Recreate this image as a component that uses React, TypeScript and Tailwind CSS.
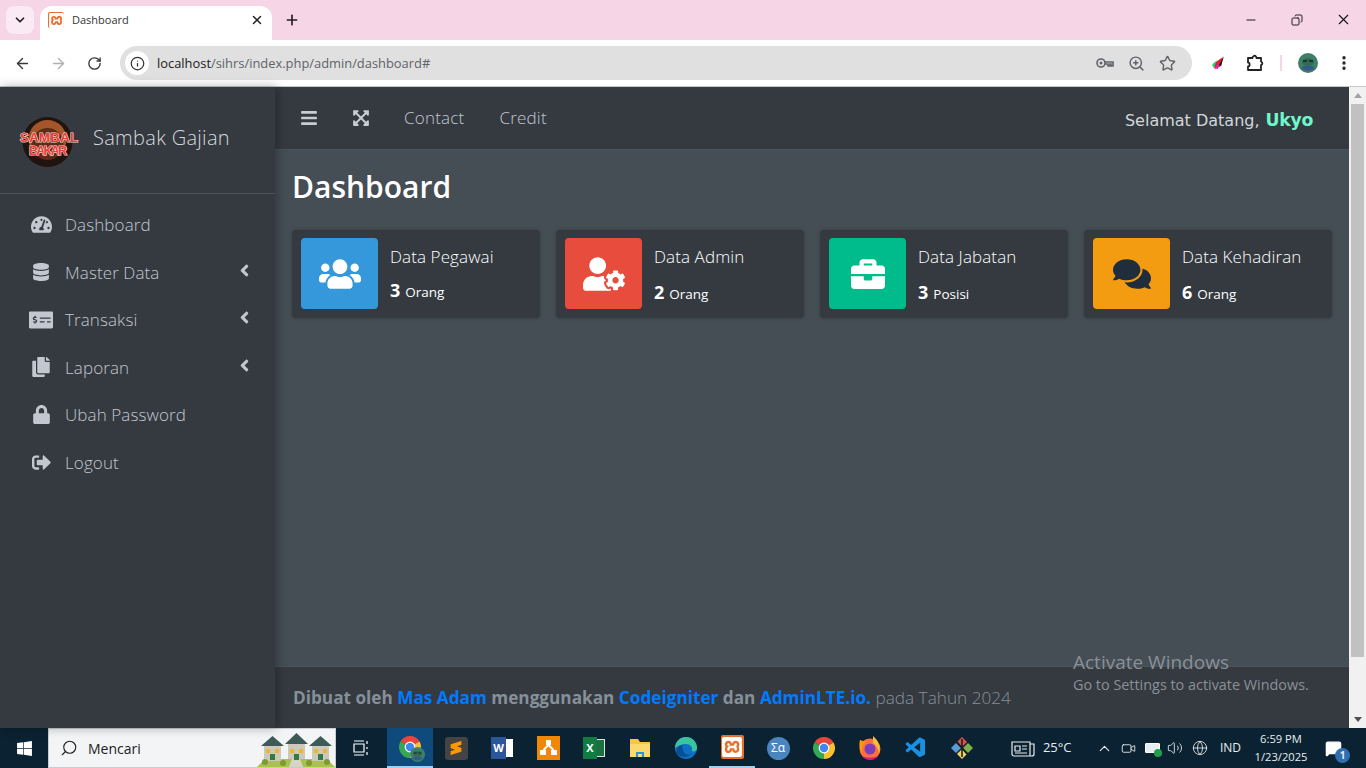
import { ArrowLeft, ArrowRight, ChevronDown, ChevronUp, Info, Minus, Plus, RotateCw, Search, Star, X, ZoomIn, Copy, MoreVertical, Video, Volume2, Globe, MessageSquare } from 'lucide-react'
import { FaAngleLeft, FaBars, FaBriefcase, FaComments, FaCopy, FaDatabase, FaExpandArrowsAlt, FaLock, FaMoneyCheckAlt, FaSignOutAlt, FaTachometerAlt, FaUserCog, FaUsers, FaWindows } from 'react-icons/fa'
import { SiSublimetext, SiXampp } from 'react-icons/si'
import { VscVscode } from 'react-icons/vsc'

const menu = [
  { label: 'Dashboard', icon: FaTachometerAlt, size: 'text-[21px]', arrow: false },
  { label: 'Master Data', icon: FaDatabase, size: 'text-[18px]', arrow: true },
  { label: 'Transaksi', icon: FaMoneyCheckAlt, size: 'text-[24px]', arrow: true },
  { label: 'Laporan', icon: FaCopy, size: 'text-[20px]', arrow: true },
  { label: 'Ubah Password', icon: FaLock, size: 'text-[19px]', arrow: false },
  { label: 'Logout', icon: FaSignOutAlt, size: 'text-[19px]', arrow: false },
]

const cards = [
  { title: 'Data Pegawai', value: '3', unit: 'Orang', icon: FaUsers, iconSize: 'text-[42px]', box: 'bg-[#3498db] text-white', shift: 'mt-[8px]' },
  { title: 'Data Admin', value: '2', unit: 'Orang', icon: FaUserCog, iconSize: 'text-[42px]', box: 'bg-[#e74c3c] text-white', shift: 'mt-[10px]' },
  { title: 'Data Jabatan', value: '3', unit: 'Posisi', icon: FaBriefcase, iconSize: 'text-[34px]', box: 'bg-[#00bc8c] text-white', shift: 'mt-[10px]' },
  { title: 'Data Kehadiran', value: '6', unit: 'Orang', icon: FaComments, iconSize: 'text-[38px]', box: 'bg-[#f39c12] text-[#1f2d3d]', shift: 'mt-[10px]' },
]

function ChromeLogo({ size = 24 }: { size?: number }) {
  return (
    <svg width={size} height={size} viewBox="0 0 24 24">
      <path d="M12 12L2.470 6.500A11 11 0 0 1 21.530 6.500z" fill="#e8453c" />
      <path d="M12 12L21.530 6.500A11 11 0 0 1 12 23z" fill="#fbc02d" />
      <path d="M12 12L12 23A11 11 0 0 1 2.470 6.500z" fill="#34a853" />
      <circle cx="12" cy="12" r="5.400" fill="#fff" />
      <circle cx="12" cy="12" r="4.200" fill="#4285f4" />
    </svg>
  )
}

function Avatar({ size }: { size: number }) {
  return (
    <svg width={size} height={size} viewBox="0 0 20 20">
      <circle cx="10" cy="10" r="10" fill="#3f7f68" />
      <path d="M3 15c2-3 12-3 14 0a10 10 0 0 1-14 0z" fill="#36598a" />
      <ellipse cx="10" cy="9" rx="6" ry="4" fill="#2f6b55" />
      <path d="M5 8h4M11 8h4" stroke="#17231e" strokeWidth="1.400" />
    </svg>
  )
}

function BrandLogo() {
  return (
    <svg width="62" height="60" viewBox="0 0 62 60" className="mt-[8px]">
      <circle cx="29.500" cy="30" r="25" fill="#21140e" />
      <circle cx="29.500" cy="27" r="19" fill="#a4552a" />
      <circle cx="29.500" cy="32" r="16" fill="#5c2c17" />
      <g fontFamily="'Liberation Sans', sans-serif" fontWeight="700" fill="#e53c3c" stroke="#f8dccb" strokeWidth="1.200" paintOrder="stroke">
        <text x="2" y="30" fontSize="13" textLength="58">SAMBAL</text>
        <text x="11" y="43" fontSize="12.500" textLength="38">BAKAR</text>
      </g>
    </svg>
  )
}

function Houses() {
  return (
    <svg width="78" height="36" viewBox="0 0 78 36">
      <path d="M0 36l8-8h62l8 8z" fill="#a9c24f" />
      <path d="M32 36l3-8h8l3 8z" fill="#d9d5c4" />
      {[6, 30, 54].map(x => (
        <g key={x}>
          <rect x={x + 1} y={x === 30 ? 12 : 14} width="17" height="16" fill="#cfc8b8" />
          <path d={`M${x - 2} ${x === 30 ? 13 : 15}l11.500-${x === 30 ? 11 : 10} 11.500 ${x === 30 ? 11 : 10}z`} fill="#3c5b58" />
          <rect x={x + 3} y="18" width="4" height="4" fill="#e3b93c" />
          <rect x={x + 12} y="18" width="4" height="4" fill="#e3b93c" />
          <rect x={x + 7} y="23" width="5" height="6" fill="#2f7d46" />
        </g>
      ))}
      <circle cx="8" cy="31" r="3" fill="#7f9b2e" />
      <circle cx="26" cy="32" r="3" fill="#7f9b2e" />
      <circle cx="52" cy="32" r="3" fill="#7f9b2e" />
      <circle cx="70" cy="31" r="3" fill="#7f9b2e" />
    </svg>
  )
}

function WordIcon() {
  return (
    <div className="relative h-[22px] w-[22px]">
      <div className="absolute right-0 top-[2px] h-[18px] w-[14px] bg-white" />
      <div className="absolute left-0 top-0 flex h-[22px] w-[15px] items-center justify-center bg-[#2b579a] text-[11px] font-bold text-white">W</div>
    </div>
  )
}

function ExcelIcon() {
  return (
    <div className="relative h-[22px] w-[22px]">
      <div className="absolute right-0 top-[2px] h-[18px] w-[14px] border border-[#d7e8dd] bg-[#1d6f42]" />
      <div className="absolute left-0 top-0 flex h-[22px] w-[14px] items-center justify-center bg-[#107c41] text-[11px] font-bold text-white">X</div>
    </div>
  )
}

function DrawioIcon() {
  return (
    <svg width="23" height="24" viewBox="0 0 23 24">
      <rect width="23" height="24" fill="#f08705" />
      <path d="M9 4h5v5H9zM3 14h6v5H3zM14 14h6v5h-6z" fill="#fff" />
      <path d="M11.500 9l-5 5M11.500 9l5 5" stroke="#fff" strokeWidth="2" />
    </svg>
  )
}

function FolderIcon() {
  return (
    <svg width="22" height="20" viewBox="0 0 22 20">
      <path d="M1 1h8l2 3h10v15H1z" fill="#f6c546" />
      <path d="M1 6h20v13H1z" fill="#fbd96f" />
      <path d="M7 14h8v5h-2v-3H9v3H7z" fill="#2f8fd8" />
    </svg>
  )
}

function EdgeIcon() {
  return (
    <svg width="24" height="24" viewBox="0 0 24 24">
      <circle cx="12" cy="12" r="11" fill="#0c70c5" />
      <path d="M1 12A11 11 0 0 1 23 12c0 3-3 4-5 3 1-4-2-7-6-7-5 0-8 2-11 4z" fill="#3ac59f" />
      <path d="M9 13c0 4 4 7 9 5a11 11 0 0 1-15 0c-2-4 1-9 6-9-1 1-1 2 0 4z" fill="#0a4f96" />
    </svg>
  )
}

function MathIcon() {
  return (
    <div className="flex h-[23px] w-[23px] items-center justify-center rounded-full bg-[#4a85bf] text-[12px] text-white">Σα</div>
  )
}

function FirefoxIcon() {
  return (
    <svg width="22" height="24" viewBox="0 0 22 24">
      <circle cx="11" cy="13" r="10.500" fill="#ff7139" />
      <path d="M14 0c6 5 8 12 6 17-1-5-3-8-6-10z" fill="#ffbd3f" />
      <path d="M1 4c-1 4-1 9 2 13 0-6 1-9 4-11z" fill="#ff980e" />
      <circle cx="11" cy="13" r="5.500" fill="#7d3bbd" />
      <path d="M3 20a10 10 0 0 0 16 0c-5 2-11 2-16 0z" fill="#e31587" />
    </svg>
  )
}

function GitGuiIcon() {
  return (
    <svg width="24" height="24" viewBox="0 0 24 24">
      <path d="M12 1l5 5-5 5-5-5z" fill="#d9534f" />
      <path d="M18 7l5 5-5 5-5-5z" fill="#7fb04a" />
      <path d="M6 7l5 5-5 5-5-5z" fill="#5b9bd5" />
      <path d="M12 13l5 5-5 5-5-5z" fill="#f1d26a" />
      <path d="M12 3v18M7 6l10 12" stroke="#1b1b1b" strokeWidth="1.500" />
    </svg>
  )
}

const taskIcons = [
  <div key="sublime" className="flex h-[23px] w-[23px] items-center justify-center rounded-[3px] bg-[#444] text-[14px] text-[#ff9800]"><SiSublimetext /></div>,
  <WordIcon key="word" />,
  <DrawioIcon key="drawio" />,
  <ExcelIcon key="excel" />,
  <FolderIcon key="folder" />,
  <EdgeIcon key="edge" />,
  <div key="xampp" className="flex h-[24px] w-[23px] items-center justify-center rounded-[2px] bg-[#e8702a] text-[20px] text-white"><SiXampp /></div>,
  <MathIcon key="math" />,
  <ChromeLogo key="chrome" />,
  <FirefoxIcon key="firefox" />,
  <VscVscode key="vscode" className="text-[24px] text-[#1b8fe0]" />,
  <GitGuiIcon key="git" />,
]

function BrowserChrome() {
  return (
    <header className="shrink-0 font-['Open_Sans',sans-serif]">
      {/* Tab strip */}
      <div className="flex h-10 items-end bg-[#f5d5e6]">
        <div className="mb-[6px] ml-[6px] flex h-[28px] w-[28px] items-center justify-center rounded-lg bg-[#faeaf3]">
          <ChevronDown size={14} strokeWidth={3} className="text-[#222]" />
        </div>
        <div className="ml-[6px] flex h-[34px] w-[232px] items-center rounded-t-xl bg-white pb-[6px] pl-2 pr-2">
          <div className="flex h-4 w-4 items-center justify-center rounded-[2px] bg-[#e8702a] text-[15px] text-white"><SiXampp /></div>
          <span className="ml-2 text-[11px] text-[#333]">Dashboard</span>
          <X size={14} strokeWidth={2.5} className="ml-auto text-[#222]" />
        </div>
        <Plus size={16} strokeWidth={2.5} className="mb-[12px] ml-[12px] text-[#222]" />
        <div className="mb-[12px] ml-auto flex items-center text-[#111]">
          <div className="flex w-[46px] justify-center"><Minus size={14} strokeWidth={1.6} /></div>
          <div className="flex w-[46px] justify-center"><Copy size={12} strokeWidth={1.8} className="-scale-x-100" /></div>
          <div className="flex w-[46px] justify-center"><X size={17} strokeWidth={1.5} /></div>
        </div>
      </div>
      {/* Address bar */}
      <div className="flex h-[47px] items-center rounded-t-lg border-b border-[#c4c7c5] bg-white">
        <div className="flex w-[116px] items-center text-[#3a3a3a]">
          <div className="flex w-[44px] justify-center"><ArrowLeft size={17} strokeWidth={2} /></div>
          <div className="-ml-[8px] flex w-[44px] justify-center text-[#b0b0b0]"><ArrowRight size={17} strokeWidth={2} /></div>
          <div className="-ml-[8px] flex w-[44px] justify-center"><RotateCw size={15} strokeWidth={2.2} /></div>
        </div>
        <div className="ml-[4px] flex h-[34px] w-[1072px] items-center rounded-full bg-[#e0e0e0] pl-[5px] pr-4">
          <div className="flex h-6 w-6 items-center justify-center rounded-full bg-white"><Info size={15} className="text-[#333]" /></div>
          <span className="ml-2 mt-[1px] text-[12.900px] text-[#202124]">localhost<span className="text-[#5f6368]">/sihrs/index.php/admin/dashboard#</span></span>
          <div className="ml-auto flex items-center gap-[14px] text-[#5f6368]">
            <svg width="18" height="12" viewBox="0 0 18 12" fill="none" stroke="currentColor" strokeWidth="1.600">
              <circle cx="5" cy="6" r="4" />
              <circle cx="5" cy="6" r="1.500" fill="currentColor" stroke="none" />
              <path d="M9 5h8v4h-2V7h-1v2h-2V7H9" />
            </svg>
            <ZoomIn size={17} />
            <Star size={17} strokeWidth={2} />
          </div>
        </div>
        <svg width="16" height="16" viewBox="0 0 16 16" className="ml-[18px]">
          <path d="M13 2L3 9l2 5 6-3z" fill="#e0202a" />
          <path d="M7 5L2 10l2 3z" fill="#21d16a" />
          <path d="M9 8l-5 5 4 1z" fill="#e81ec8" />
          <path d="M14 1l-5 9 2 1z" fill="#111" />
        </svg>
        <svg width="18" height="18" viewBox="0 0 18 18" fill="none" stroke="#222" strokeWidth="1.800" strokeLinejoin="round" className="ml-[20px]">
          <path d="M2 4h4.500a2 2 0 0 1 3.500-1.500L10.500 4H15v3.500a1.800 1.800 0 0 1 0 3.500V16H2v-3.500c2.200 0 2.200-4 0-4z" />
        </svg>
        <div className="ml-[16px] h-[16px] w-[2px] bg-[#f5d5e6]" />
        <div className="ml-[16px]"><Avatar size={20} /></div>
        <MoreVertical size={18} strokeWidth={2.5} className="ml-[17px] text-[#222]" />
      </div>
    </header>
  )
}

function Sidebar() {
  return (
    <aside className="z-10 flex w-[275px] shrink-0 flex-col bg-[#343a40] shadow-[2px_0_10px_rgba(0,0,0,0.3)]">
      <div className="flex h-[107px] items-center border-b border-[#4b545c] pb-[4px] pl-[18px]">
        <BrandLogo />
        <span className="ml-[13px] text-[20px] font-light tracking-[0.3px] text-[#d5d9dd]">Sambak Gajian</span>
      </div>
      <nav className="flex flex-col pt-[7px]">
        {menu.map(item => (
          <div key={item.label} className="flex h-[47.500px] items-center pl-[28px] pr-[21px] text-[#c2c7d0]">
            <div className={`flex w-[26px] justify-center ${item.size}`}><item.icon /></div>
            <span className="ml-[11px] text-[17px] font-light tracking-[0.1px]">{item.label}</span>
            {item.arrow && <FaAngleLeft className="ml-auto -translate-y-[2px] text-[19px]" />}
          </div>
        ))}
      </nav>
    </aside>
  )
}

function Navbar() {
  return (
    <div className="flex h-[63px] shrink-0 items-center border-b border-[#4b545c] bg-[#343a40] pl-[25px] pr-[36px]">
      <FaBars className="text-[18px] text-[#c9ccd0]" />
      <FaExpandArrowsAlt className="ml-[34px] text-[18px] text-[#c9ccd0]" />
      <span className="ml-[34px] text-[17px] font-light tracking-[0.2px] text-[#c2c7d0]">Contact</span>
      <span className="ml-[35px] text-[17px] font-light tracking-[0.2px] text-[#c2c7d0]">Credit</span>
      <div className="ml-auto mt-[5px] flex items-baseline font-['DejaVu_Sans',sans-serif] text-[#d3d7da]">
        <span className="text-[16px]">Selamat Datang,</span>
        <span className="ml-[6px] text-[17.300px] font-bold tracking-[-0.3px] text-[#6ff7cb]">Ukyo</span>
      </div>
    </div>
  )
}

function InfoCard({ card }: { card: (typeof cards)[number] }) {
  return (
    <div className="flex h-[88px] items-stretch rounded-[4px] bg-[#343a40] pb-[9px] pl-[9px] pt-[8px] shadow-[0_0_4px_rgba(0,0,0,0.2)]">
      <div className={`flex w-[77px] shrink-0 items-center justify-center rounded-[4px] ${card.iconSize} ${card.box}`}>
        <card.icon />
      </div>
      <div className="ml-[12px] flex flex-col text-white">
        <span className="mt-[6px] text-[17px] font-light leading-[26px] tracking-[0.1px]">{card.title}</span>
        <div className={`flex items-baseline ${card.shift}`}>
          <span className="text-[18px] font-bold leading-[24px]">{card.value}</span>
          <span className="ml-[5px] text-[13.500px] font-normal">{card.unit}</span>
        </div>
      </div>
    </div>
  )
}

function Footer() {
  return (
    <footer className="flex h-[62px] shrink-0 items-center border-t border-[#4b545c] bg-[#343a40] pl-[18px] text-[17.200px] text-[#869099]">
      <p className="font-bold">
        Dibuat oleh <a className="text-[#007bff]">Mas Adam</a> menggunakan <a className="text-[#007bff]">Codeigniter</a> dan <a className="text-[#007bff]">AdminLTE.io.</a> <span className="font-light">pada Tahun 2024</span>
      </p>
    </footer>
  )
}

function Scrollbar() {
  return (
    <div className="flex w-[17px] shrink-0 flex-col items-center bg-[#f1f1f1]">
      <div className="mt-[6px] h-0 w-0 border-x-[4px] border-b-[5px] border-x-transparent border-b-[#a3a3a3]" />
      <div className="mt-[6px] h-[553px] w-[13px] bg-[#c1c1c1]" />
      <div className="mt-auto mb-[6px] h-0 w-0 border-x-[4px] border-t-[5px] border-x-transparent border-t-[#505050]" />
    </div>
  )
}

function Taskbar() {
  return (
    <footer className="flex h-10 shrink-0 items-center bg-[#0a2231] font-['Open_Sans',sans-serif] text-white">
      <div className="flex w-[48px] justify-center text-[17px]"><FaWindows /></div>
      <div className="flex h-10 w-[288px] items-center overflow-hidden border border-[#c8ccd0] bg-[#f3f4f6] pl-[11px] text-[#222]">
        <Search size={18} strokeWidth={1.5} className="-scale-x-100" />
        <span className="ml-[10px] text-[14px]">Mencari</span>
        <div className="ml-auto self-end"><Houses /></div>
      </div>
      <div className="flex w-[51px] justify-center pr-[2px]">
        <svg width="16" height="16" viewBox="0 0 16 16" fill="none" stroke="#fff" strokeWidth="1.200">
          <path d="M1 1h10M1 15h10M1 4h10v8H1zM14 1v3M14 7v2M14 12v3" />
        </svg>
      </div>
      <div className="flex h-10 w-[46px] items-center justify-center border-b-[2px] border-[#9fd0f0] bg-[#0e4a7c]">
        <div className="relative">
          <ChromeLogo />
          <div className="absolute -bottom-[3px] -right-[3px]"><Avatar size={15} /></div>
        </div>
      </div>
      {taskIcons.map((icon, i) => (
        <div key={i} className={`flex h-10 w-[46px] items-center justify-center ${i === 6 ? 'border-b-[2px] border-[#9fd0f0]' : ''}`}>
          {icon}
        </div>
      ))}
      <div className="ml-auto flex items-center text-[#e8edf0]">
        <svg width="24" height="17" viewBox="0 0 24 17" fill="none" stroke="currentColor" strokeWidth="1.200">
          <path d="M1 2h18v14H3a2 2 0 0 1-2-2zM19 4h4v10a2 2 0 0 1-2 2h-2" />
          <path d="M4 6h5v5H4zM11 6h5M11 9h5M4 13h12" />
        </svg>
        <span className="ml-[8px] w-[48px] text-[13px]">25°C</span>
        <ChevronUp size={17} strokeWidth={1.5} className="ml-[5px]" />
        <Video size={15} strokeWidth={1.4} className="ml-[8px]" />
        <div className="relative ml-[9px] h-[10px] w-[15px] rounded-[1px] border border-white bg-[#e8edf0]">
          <div className="absolute -bottom-[5px] -right-[3px] h-[8px] w-[8px] rounded-full bg-[#1fa04a]" />
        </div>
        <Volume2 size={16} strokeWidth={1.3} className="ml-[7px]" />
        <Globe size={16} strokeWidth={1.3} className="ml-[9px]" />
        <span className="ml-[12px] text-[12px]">IND</span>
        <div className="ml-[7px] flex w-[66px] flex-col items-center text-[11.200px] leading-[18px]">
          <span>6:59 PM</span>
          <span>1/23/2025</span>
        </div>
        <div className="relative ml-[11px] mr-[24px]">
          <MessageSquare size={17} fill="#fff" stroke="#fff" />
          <div className="absolute -bottom-[6px] -right-[8px] flex h-[15px] w-[15px] items-center justify-center rounded-full bg-[#2d6fb0] text-[10px] font-bold">1</div>
        </div>
      </div>
    </footer>
  )
}

export default function App() {
  return (
    <div className="relative flex h-screen flex-col overflow-hidden font-['Open_Sans',sans-serif]">
      <BrowserChrome />
      <div className="flex min-h-0 flex-1">
        <Sidebar />
        <main className="flex min-w-0 flex-1 flex-col bg-[#454d55]">
          <Navbar />
          <div className="flex-1 px-[17px] pt-[14px]">
            <h1 className="text-[30px] font-semibold leading-[46px] text-white">Dashboard</h1>
            <div className="mt-[20px] grid grid-cols-4 gap-4">
              {cards.map(card => (
                <InfoCard key={card.title} card={card} />
              ))}
            </div>
          </div>
          <Footer />
        </main>
        <Scrollbar />
      </div>
      <Taskbar />
      {/* Windows activation watermark */}
      <div className="pointer-events-none absolute left-[1073px] top-[650px] text-[#8a9097]">
        <p className="text-[19px] leading-[24px]">Activate Windows</p>
        <p className="text-[14.400px] leading-[22px]">Go to Settings to activate Windows.</p>
      </div>
    </div>
  )
}
